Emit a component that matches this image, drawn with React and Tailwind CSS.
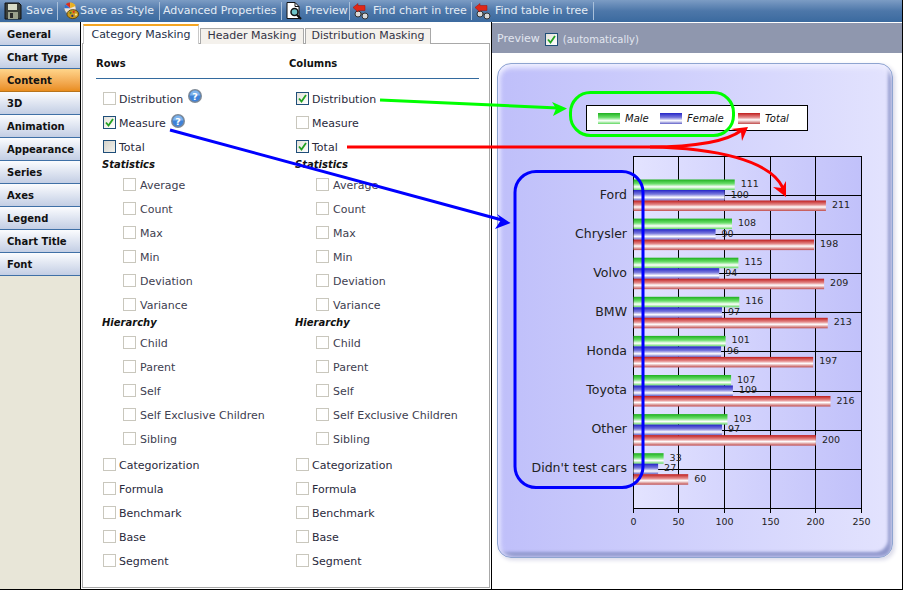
// Chart editor – masking tab with annotated preview
const stats = ['Average', 'Count', 'Max', 'Min', 'Deviation', 'Variance'];
const hierarchy = ['Child', 'Parent', 'Self', 'Self Exclusive Children', 'Sibling'];
const extras = ['Categorization', 'Formula', 'Benchmark', 'Base', 'Segment'];
const navItems = ['General', 'Chart Type', 'Content', '3D', 'Animation', 'Appearance', 'Series', 'Axes', 'Legend', 'Chart Title', 'Font'];

const chartData = [
    { name: 'Ford', male: 111, female: 100, total: 211 },
    { name: 'Chrysler', male: 108, female: 90, total: 198 },
    { name: 'Volvo', male: 115, female: 94, total: 209 },
    { name: 'BMW', male: 116, female: 97, total: 213 },
    { name: 'Honda', male: 101, female: 96, total: 197 },
    { name: 'Toyota', male: 107, female: 109, total: 216 },
    { name: 'Other', male: 103, female: 97, total: 200 },
    { name: "Didn't test cars", male: 33, female: 27, total: 60 },
];

function SaveIcon() {
    return (
        <svg width="18" height="18" viewBox="0 0 18 18" className="shrink-0">
            <path d="M1 1h14l2 2v14H1z" fill="#3a3f3a" stroke="#111" />
            <rect x="4" y="2" width="9" height="6" fill="#d8dcc8" />
            <rect x="4" y="10" width="10" height="7" fill="#9aa08c" />
            <rect x="6" y="11" width="3" height="5" fill="#2a2a2a" />
        </svg>
    );
}

function StyleIcon() {
    return (
        <svg width="18" height="18" viewBox="0 0 18 20" className="shrink-0">
            <circle cx="8" cy="7" r="6.5" fill="#e8e4dc" stroke="#777" strokeWidth=".5" />
            <path d="M8 7 3 2.500A6.500 6.500 0 0 1 8 .5z" fill="#d83020" />
            <path d="M8 7V.5a6.500 6.500 0 0 1 6 4z" fill="#e8b020" />
            <path d="M8 7 1.500 7a6.500 6.500 0 0 1 1.500-4.500z" fill="#3070d0" />
            <ellipse cx="11" cy="13.500" rx="6.500" ry="5" fill="#c89a20" stroke="#5a4208" />
            <circle cx="8.500" cy="12" r="1.200" fill="#3a8a30" />
            <circle cx="12" cy="11" r="1.200" fill="#d83020" />
            <circle cx="14.500" cy="14" r="1.200" fill="#f8e8a0" />
            <circle cx="10.500" cy="15.500" r="1.200" fill="#203080" />
        </svg>
    );
}

function PreviewIcon() {
    return (
        <svg width="18" height="18" viewBox="0 0 18 18" className="shrink-0">
            <path d="M2 .5h8l4 4v12H2z" fill="#fff" stroke="#111" />
            <path d="M10 .5v4h4" fill="none" stroke="#111" />
            <circle cx="9.500" cy="10" r="3.500" fill="#6fc4c8" stroke="#111" strokeWidth="1.500" />
            <path d="m12 13 4 4" stroke="#111" strokeWidth="2.200" />
        </svg>
    );
}

function FindIcon() {
    return (
        <svg width="17" height="17" viewBox="0 0 17 17" className="shrink-0">
            <path d="M3 8.500 9 11l5 1" stroke="#555" strokeWidth="2" fill="none" />
            <circle cx="5" cy="11" r="3" fill="#d8d8d8" stroke="#333" />
            <circle cx="12" cy="13" r="3" fill="#d8d8d8" stroke="#333" />
            <path d="M0 4.500 5 .5v2h7v5H5v1.500z" fill="#e02818" stroke="#a01008" strokeWidth=".5" />
        </svg>
    );
}

function HelpIcon({ className }) {
    return (
        <svg width="14" height="14" viewBox="0 0 14 14" className={className}>
            <circle cx="7" cy="7" r="7" fill="#7f8a96" />
            <circle cx="7" cy="7" r="5.600" fill="#3f82d8" />
            <path d="M2 6.500a5 5 0 0 1 10 0z" fill="#7fb4ec" />
            <text x="7" y="10.500" textAnchor="middle" fontSize="9.500" fontWeight="700" fill="#fff" fontFamily="DejaVu Sans">?</text>
        </svg>
    );
}

function Box({ checked, focused }) {
    let look = 'border-[#c9c7bd] bg-white';
    if (checked) look = 'border-[#1f4e79] bg-gradient-to-br from-[#e4e2da] to-white';
    if (focused) look = 'border-[#1f4e79] bg-gradient-to-br from-[#d4d2ca] to-[#f4f3ee]';
    return (
        <span className={`w-[13px] h-[13px] border shrink-0 flex items-center justify-center ${look}`}>
            {checked && (
                <svg width="9" height="9" viewBox="0 0 9 9">
                    <path d="M1 4.500 3.500 7.500 8 1" fill="none" stroke="#21a121" strokeWidth="1.800" />
                </svg>
            )}
        </span>
    );
}

function Check({ label, checked, focused, sub, help }) {
    return (
        <div className={`h-6 flex items-start pt-[6px] ${sub ? 'pl-[27px] gap-[4px] text-[#404050]' : 'pl-[7px] gap-[3px] text-[#2a2a3c]'}`}>
            <Box checked={checked} focused={focused} />
            <span className="leading-[14px] mt-px">{label}</span>
            {help}
        </div>
    );
}

function SectionTitle({ children }) {
    return <div className="h-[14px] leading-[14px] pl-[6px] text-[10px] font-bold italic text-[#111]">{children}</div>;
}

function MaskColumn({ top }) {
    return (
        <div className="w-[193px]">
            {top}
            <SectionTitle>Statistics</SectionTitle>
            {stats.map((s) => <Check key={s} label={s} sub />)}
            <SectionTitle>Hierarchy</SectionTitle>
            {hierarchy.map((s) => <Check key={s} label={s} sub />)}
            <div className="mt-[2px]">
                {extras.map((s) => <Check key={s} label={s} />)}
            </div>
        </div>
    );
}

function ToolItem({ width, icon, label, pad }) {
    return (
        <div className={`h-full flex items-center shrink-0 border-r border-[#a9c0da] ${width} ${pad}`}>
            {icon}
            <span className="text-[#e4ecf5] whitespace-nowrap">{label}</span>
        </div>
    );
}

function Toolbar() {
    return (
        <div className="h-[22px] flex items-stretch py-[2px] bg-gradient-to-b from-[#7c9cc4] via-[#4d77a9] to-[#3b6a9f] text-[11px] shrink-0">
            <ToolItem width="w-[58px]" pad="pl-[4px] gap-[4px]" icon={<SaveIcon />} label="Save" />
            <ToolItem width="w-[102px]" pad="pl-[4px]" icon={<StyleIcon />} label="Save as Style" />
            <ToolItem width="w-[122px]" pad="pl-[3px]" label="Advanced Properties" />
            <ToolItem width="w-[68px]" pad="pl-[3px] gap-[2px]" icon={<PreviewIcon />} label="Preview" />
            <ToolItem width="w-[122px]" pad="pl-[3px] gap-[3px]" icon={<FindIcon />} label="Find chart in tree" />
            <ToolItem width="w-[122px]" pad="pl-[3px] gap-[3px]" icon={<FindIcon />} label="Find table in tree" />
        </div>
    );
}

function Sidebar() {
    return (
        <div className="w-[81px] shrink-0 border-r border-black bg-[#e8e6d8] pt-px">
            {navItems.map((item) => (
                <div
                    key={item}
                    className={`h-[23px] pl-[7px] flex items-center border-b text-[10px] font-bold text-[#111] ${item === 'Content'
                        ? 'border-[#b8741c] bg-gradient-to-b from-[#ffd58a] to-[#e98d1c]'
                        : 'border-[#3f70a6] bg-gradient-to-b from-[#fbfcfe] to-[#c3cee4]'}`}
                >
                    {item}
                </div>
            ))}
        </div>
    );
}

function MaskingPanel() {
    const tab = 'h-[16px] flex items-center justify-center border border-b-0 border-[#a8a8a8] bg-[#f4f1ec] text-[#333344]';
    return (
        <div className="w-[410px] shrink-0 flex flex-col pl-px pr-px pb-px">
            {/* Tabs */}
            <div className="h-[22px] flex items-end pl-px gap-px shrink-0 relative z-10 -mb-px">
                <div className="w-[116px] h-[20px] flex items-center justify-center border-t-2 border-x border-[#f5a623] border-x-[#c8c8c8] bg-white text-[#25304a]">Category Masking</div>
                <div className={`w-[104px] ${tab}`}>Header Masking</div>
                <div className={`w-[126px] ${tab}`}>Distribution Masking</div>
            </div>

            {/* Rows / Columns */}
            <div className="flex-1 border border-[#a8a8a8] pl-[13px]">
                <div className="w-[383px] h-[35px] flex items-end pb-[7px] border-b border-[#336a9e] font-bold text-[10px] text-[#111] leading-[14px]">
                    <span className="w-[193px]">Rows</span>
                    <span>Columns</span>
                </div>
                <div className="flex pt-[7px]">
                    <MaskColumn
                        top={(
                            <>
                                <Check label="Distribution" help={<HelpIcon className="ml-[2px] -mt-[3px]" />} />
                                <Check label="Measure" checked help={<HelpIcon className="ml-[2px] -mt-[2px]" />} />
                                <Check label="Total" focused />
                            </>
                        )}
                    />
                    <MaskColumn
                        top={(
                            <>
                                <Check label="Distribution" checked />
                                <Check label="Measure" />
                                <Check label="Total" checked />
                            </>
                        )}
                    />
                </div>
            </div>
        </div>
    );
}

function BarChart() {
    const x0 = 633.5;
    const scale = 0.912;
    const bars = [['male', 'gGreen', 0], ['female', 'gBlue', 10.5], ['total', 'gRed', 21]];
    return (
        <svg width="380" height="385" viewBox="510 150 380 385" className="block" style={{ fontFamily: 'DejaVu Sans' }}>
            <defs>
                <linearGradient id="plotBg" x1="0" x2="1" y1="0" y2="0">
                    <stop offset="0" stopColor="#e3e3ff" />
                    <stop offset="1" stopColor="#c1c1fa" />
                </linearGradient>
                <linearGradient id="gGreen" x1="0" x2="0" y1="0" y2="1">
                    <stop offset="0" stopColor="#1eb01e" />
                    <stop offset=".4" stopColor="#6ade6a" />
                    <stop offset=".7" stopColor="#ffffff" />
                    <stop offset="1" stopColor="#5fd85f" />
                </linearGradient>
                <linearGradient id="gBlue" x1="0" x2="0" y1="0" y2="1">
                    <stop offset="0" stopColor="#2424c8" />
                    <stop offset=".4" stopColor="#7878dc" />
                    <stop offset=".7" stopColor="#ffffff" />
                    <stop offset="1" stopColor="#6060c8" />
                </linearGradient>
                <linearGradient id="gRed" x1="0" x2="0" y1="0" y2="1">
                    <stop offset="0" stopColor="#c01c1c" />
                    <stop offset=".4" stopColor="#e48c8c" />
                    <stop offset=".62" stopColor="#ffffff" />
                    <stop offset="1" stopColor="#c04a4a" />
                </linearGradient>
            </defs>

            <rect x="633.500" y="155.500" width="228" height="352" fill="url(#plotBg)" stroke="#000" />
            {[678.5, 724.5, 770.5, 815.5].map((x) => (
                <line key={x} x1={x} x2={x} y1="155" y2="507" stroke="#000" />
            ))}
            {chartData.map((_, i) => {
                const y = Math.round(194 + i * 39.1) + 0.5;
                return <line key={i} x1="633" x2="861" y1={y} y2={y} stroke="#000" />;
            })}
            {[633.5, 678.5, 724.5, 770.5, 815.5, 861.5].map((x, i) => (
                <g key={x}>
                    <line x1={x} x2={x} y1="507" y2="512" stroke="#000" />
                    <text x={x} y="524" textAnchor="middle" fontSize="9.500" fill="#222">{i * 50}</text>
                </g>
            ))}

            {chartData.map((row, i) => {
                const top = 178.5 + i * 39.1;
                return (
                    <g key={row.name}>
                        {bars.map(([key, fill, dy]) => (
                            <g key={key}>
                                <rect x={x0} y={top + dy} width={row[key] * scale} height="10.500" fill={`url(#${fill})`} />
                                <text x={x0 + row[key] * scale + 6} y={top + dy + 7.5} fontSize="9.500" fill="#222">{row[key]}</text>
                            </g>
                        ))}
                        <text x="627" y={top + 19} textAnchor="end" fontSize="12.500" fill="#222">{row.name}</text>
                    </g>
                );
            })}
        </svg>
    );
}

function Legend() {
    const items = [
        ['Male', 'bg-[linear-gradient(#1eb01e,#6ade6a_40%,#fff_70%,#5fd85f)]', 'w-[62px]'],
        ['Female', 'bg-[linear-gradient(#2424c8,#7878dc_40%,#fff_70%,#6060c8)]', 'w-[78px]'],
        ['Total', 'bg-[linear-gradient(#c01c1c,#e48c8c_40%,#fff_62%,#c04a4a)]', ''],
    ];
    return (
        <div className="ml-[88px] mt-[41px] w-[222px] h-[26px] flex items-center pl-[11px] bg-white border border-black text-[10px] italic text-[#111]">
            {items.map(([name, bar, width]) => (
                <div key={name} className={`flex items-center gap-[5px] ${width}`}>
                    <span className={`w-[22px] h-[11px] ${bar}`} />
                    {name}
                </div>
            ))}
        </div>
    );
}

function PreviewPanel() {
    return (
        <div className="flex-1 border-l border-black flex flex-col">
            <div className="h-[30px] shrink-0 mt-px flex items-center pl-[5px] pt-[2px] bg-[#8f97ae] text-[#e2e6f0] text-[10px]">
                <span className="text-[11px]">Preview</span>
                <span className="ml-[5px] mr-[5px]"><Box checked /></span>
                (automatically)
            </div>
            <div className="flex-1 pl-[5px] pt-[10px]">
                <div className="w-[396px] h-[495px] rounded-[14px] border border-[#8ea4d0] bg-gradient-to-r from-[#bfbffa] to-[#e3e3fe] shadow-[inset_0_4px_5px_#eeeeff,inset_3px_0_4px_#d8d8ff,inset_-4px_-5px_3px_#8f97cc,2px_2px_4px_#d8d8e8]">
                    <Legend />
                    <div className="mt-[20px] ml-[12px]">
                        <BarChart />
                    </div>
                </div>
            </div>
        </div>
    );
}

// hand-drawn arrows and circles on top of the screenshot
function Annotations() {
    return (
        <svg width="903" height="590" viewBox="0 0 903 590" fill="none" className="absolute inset-0 pointer-events-none">
            <path d="M380 100 558 108" stroke="#00ff00" strokeWidth="3" />
            <path d="M567 108.500 552 102 556 108.500 553 116z" fill="#00ff00" />
            <rect x="570.500" y="92.500" width="163" height="43" rx="20" stroke="#00ff00" strokeWidth="3" />

            <path d="M347 147H650C690 147 725 143 742 130" stroke="#ff0000" strokeWidth="3" />
            <path d="M748 127 731 129 741 132 742 141z" fill="#ff0000" />
            <path d="M650 147C715 148 770 160 783 188" stroke="#ff0000" strokeWidth="3" />
            <path d="M786 197 773 187 782 188 786 181z" fill="#ff0000" />

            <path d="M170 130 502 220" stroke="#0000ff" strokeWidth="3" />
            <path d="M510.500 223 497 214 501 220 495 229z" fill="#0000ff" />
            <rect x="515" y="171.500" width="128" height="316" rx="21" stroke="#0000ff" strokeWidth="3" />
        </svg>
    );
}

export default function App() {
    return (
        <div className="relative w-[903px] h-[590px] overflow-hidden flex flex-col bg-white border-r border-b border-black font-['DejaVu_Sans',sans-serif] text-[11px]">
            <Toolbar />
            <div className="flex-1 flex min-h-0">
                <Sidebar />
                <MaskingPanel />
                <PreviewPanel />
            </div>
            <Annotations />
        </div>
    );
}
